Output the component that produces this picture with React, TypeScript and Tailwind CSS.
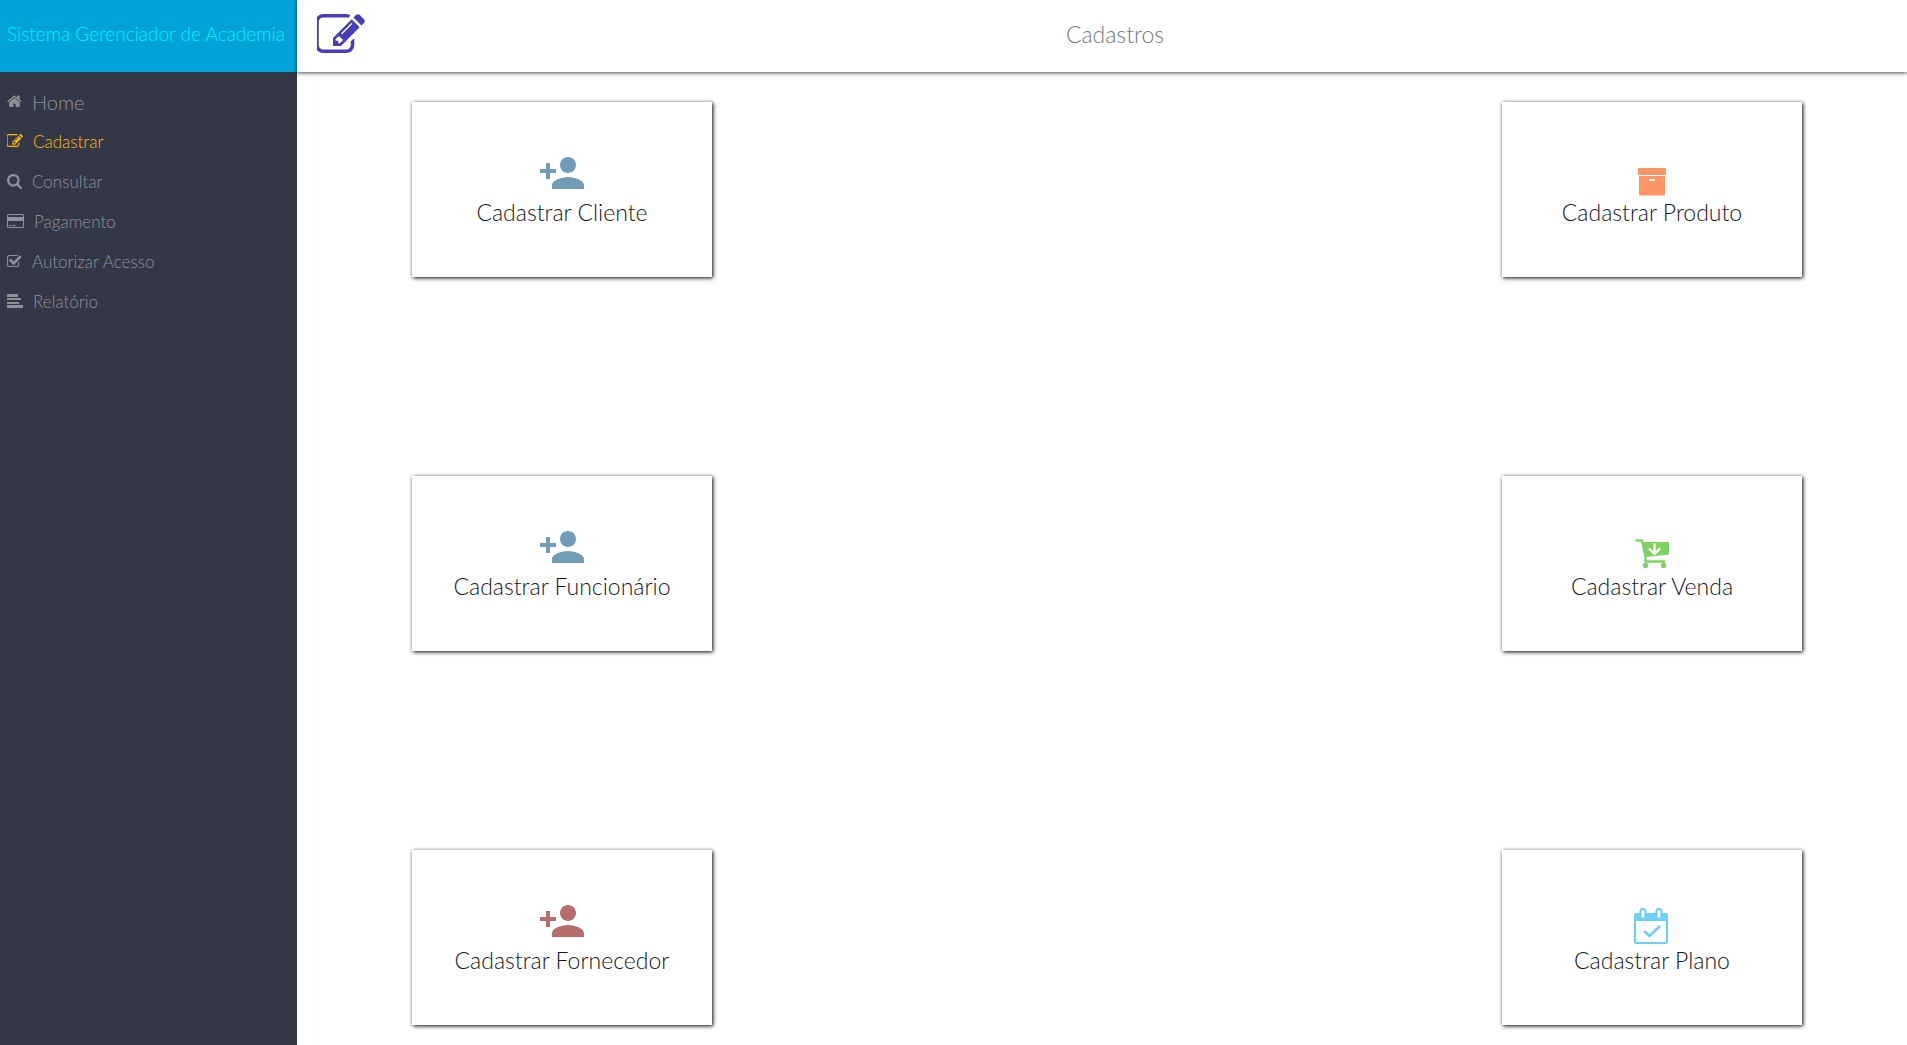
import type { ReactNode } from "react";
import { MdPersonAdd } from "react-icons/md";

const HOME =
  "M1472 992v480q0 26-19 45t-45 19h-384v-384h-256v384h-384q-26 0-45-19t-19-45v-480q0-1 .5-3t.5-3l575-474 575 474q1 2 1 6zm223-69l-62 74q-8 9-21 11h-3q-13 0-21-7l-692-577-692 577q-12 8-24 7-13-2-21-11l-62-74q-8-10-7-23.5t11-21.5l719-599q32-26 76-26t76 26l244 204v-195q0-14 9-23t23-9h192q14 0 23 9t9 23v408l219 182q10 8 11 21.5t-7 23.5z";
const EDIT =
  "M888 1184l116-116-152-152-116 116v56h96v96h56zm440-720q-16-16-33 1l-350 350q-17 17-1 33t33-1l350-350q17-17 1-33zm80 594v190q0 119-84.5 203.5t-203.5 84.5h-832q-119 0-203.5-84.5t-84.5-203.5v-832q0-119 84.5-203.5t203.5-84.5h832q63 0 117 25 15 7 18 23 3 17-9 29l-49 49q-14 14-32 8-23-6-45-6h-832q-66 0-113 47t-47 113v832q0 66 47 113t113 47h832q66 0 113-47t47-113v-126q0-13 9-22l64-64q15-15 35-7t20 29zm-96-738l288 288-672 672h-288v-288zm444 132l-92 92-288-288 92-92q28-28 68-28t68 28l152 152q28 28 28 68t-28 68z";
const SEARCH =
  "M1216 832q0-185-131.5-316.5t-316.5-131.5-316.5 131.5-131.5 316.5 131.5 316.5 316.5 131.5 316.5-131.5 131.5-316.5zm512 832q0 52-38 90t-90 38q-54 0-90-38l-343-342q-179 124-399 124-143 0-273.5-55.5t-225-150-150-225-55.5-273.5 55.5-273.5 150-225 225-150 273.5-55.5 273.5 55.5 225 150 150 225 55.5 273.5q0 220-124 399l343 343q37 37 37 90z";
const CHECK =
  "M1472 930v318q0 119-84.5 203.5t-203.5 84.5h-832q-119 0-203.5-84.5t-84.5-203.5v-832q0-119 84.5-203.5t203.5-84.5h832q63 0 117 25 15 7 18 23 3 17-9 29l-49 49q-10 10-23 10-3 0-9-2-23-6-45-6h-832q-66 0-113 47t-47 113v832q0 66 47 113t113 47h832q66 0 113-47t47-113v-254q0-13 9-22l64-64q10-10 23-10 6 0 12 3 20 8 20 29zm231-489l-814 814q-24 24-57 24t-57-24l-430-430q-24-24-24-57t24-57l110-110q24-24 57-24t57 24l263 263 647-647q24-24 57-24t57 24l110 110q24 24 24 57t-24 57z";

function Glyph({ d, viewBox, className }: { d: string; viewBox: string; className: string }) {
  return (
    <svg viewBox={viewBox} className={className} fill="currentColor" aria-hidden="true">
      <path d={d} />
    </svg>
  );
}

const navItems: { label: string; icon: ReactNode; active?: boolean; size: string }[] = [
  { label: "Home", size: "text-xl", icon: <Glyph d={HOME} viewBox="64 192 1664 1408" className="w-[15px]" /> },
  { label: "Cadastrar", size: "text-[17px]", active: true, icon: <Glyph d={EDIT} viewBox="64 128 1728 1408" className="w-4" /> },
  { label: "Consultar", size: "text-[17px]", icon: <Glyph d={SEARCH} viewBox="64 128 1664 1664" className="w-[15px]" /> },
  {
    label: "Pagamento",
    size: "text-[17px]",
    icon: (
      <svg viewBox="0 0 17 14" className="w-[17px]" fill="currentColor" aria-hidden="true">
        <path
          fillRule="evenodd"
          d="M1.500 0h14A1.500 1.500 0 0 1 17 1.500v11A1.500 1.500 0 0 1 15.500 14h-14A1.500 1.500 0 0 1 0 12.500v-11A1.500 1.500 0 0 1 1.500 0zM1 1.500V3h15V1.500a.5.500 0 0 0-.5-.5h-14a.5.500 0 0 0-.5.500zM1 7v5.500a.5.500 0 0 0 .5.500h14a.5.500 0 0 0 .5-.5V7zM2 11h2v1H2zM5 11h3.500v1H5z"
        />
      </svg>
    ),
  },
  { label: "Autorizar Acesso", size: "text-[17px]", icon: <Glyph d={CHECK} viewBox="64 128 1728 1408" className="w-[15px]" /> },
  { label: "Relatório", size: "text-[17px]", icon: <Glyph d="M0 0h11v3H0zM0 4h14v2H0zM0 8h12v2H0zM0 11h16v3H0z" viewBox="0 0 16 14" className="w-4" /> },
];

function ArchiveIcon() {
  return (
    <svg viewBox="0 0 48 48" className="size-12 text-[#ff9562]" fill="currentColor" aria-hidden="true">
      <rect x="10" y="19" width="28" height="7" rx="1" />
      <path fillRule="evenodd" d="M11 27h26v18.500a1 1 0 0 1-1 1H12a1 1 0 0 1-1-1zM22 30a1 1 0 0 0 0 2h4a1 1 0 0 0 0-2z" />
    </svg>
  );
}

function CartIcon() {
  return (
    <svg viewBox="0 0 48 48" className="size-12 text-[#80d363]" fill="currentColor" aria-hidden="true">
      <path d="M14 19h26q1 0 1 1v10.500q0 1-1 1.200L17.500 34z" />
      <path d="M8.500 17.500H14L17.500 34v4.500H36" fill="none" stroke="currentColor" strokeWidth="2.400" strokeLinecap="round" strokeLinejoin="round" />
      <circle cx="17.500" cy="42.500" r="2.700" />
      <circle cx="35.500" cy="42.500" r="2.700" />
      <path d="M17 40v2M35.500 39v3" stroke="currentColor" strokeWidth="2" />
      <path d="M26.500 21.500v9M21.500 26l5 5 5-5" fill="none" stroke="white" strokeWidth="2.400" strokeLinecap="round" strokeLinejoin="round" />
    </svg>
  );
}

function CalendarIcon() {
  return (
    <svg viewBox="0 0 48 48" className="size-12 text-[#6fcff6]" fill="none" stroke="currentColor" aria-hidden="true">
      <path d="M6 24v-5q0-3 3-3h28q3 0 3 3v5z" fill="currentColor" stroke="none" />
      <rect x="7" y="17" width="32" height="29" rx="2" strokeWidth="2.200" />
      <rect x="12.500" y="12" width="5" height="9.500" rx="2" fill="white" strokeWidth="2.200" />
      <rect x="28.500" y="12" width="5" height="9.500" rx="2" fill="white" strokeWidth="2.200" />
      <path d="M16 34l5.500 5L32 29" strokeWidth="2.600" />
    </svg>
  );
}

const cards: { label: string; icon: ReactNode }[] = [
  { label: "Cadastrar Cliente", icon: <MdPersonAdd className="size-12 text-[#709cb7]" /> },
  { label: "Cadastrar Produto", icon: <ArchiveIcon /> },
  { label: "Cadastrar Funcionário", icon: <MdPersonAdd className="size-12 text-[#709cb7]" /> },
  { label: "Cadastrar Venda", icon: <CartIcon /> },
  { label: "Cadastrar Fornecedor", icon: <MdPersonAdd className="size-12 text-[#b56d6d]" /> },
  { label: "Cadastrar Plano", icon: <CalendarIcon /> },
];

export default function App() {
  return (
    <div className="flex min-h-screen bg-white font-['Lato',sans-serif] font-light">
      <aside className="w-[297px] shrink-0 bg-[#343746]">
        <div className="flex h-18 items-center bg-[#00a3d7] pb-1 pl-[7px] text-[19px] whitespace-nowrap text-[#00f0ff]">
          Sistema Gerenciador de Academia
        </div>
        <nav className="pt-2.5 pl-[7px]">
          {navItems.map((item) => (
            <a
              key={item.label}
              href="#"
              className={`flex h-10 items-center gap-2.5 ${item.size} ${item.active ? "text-[#fdba12]" : "text-[#909297]"}`}
            >
              <span className="pb-0.5">{item.icon}</span>
              {item.label}
            </a>
          ))}
        </nav>
      </aside>
      <div className="flex min-w-0 flex-1 flex-col">
        <header className="flex h-18 items-center pr-[42px] pb-1 pl-5 shadow-[0_1px_4px_#000000b3]">
          <Glyph d={EDIT} viewBox="64 128 1728 1408" className="w-12 text-[#4a3db8]" />
          <h1 className="flex-1 text-center text-[23px] text-[#75787d]">Cadastros</h1>
        </header>
        <main className="grid flex-1 grid-cols-[300px_300px] content-between justify-between pt-[30px] pr-[105px] pb-5 pl-[115px]">
          {cards.map((card) => (
            <button
              key={card.label}
              type="button"
              className="flex h-[175px] flex-col items-center justify-center bg-white pb-1 text-[23px] leading-[30px] text-[#15181b] shadow-[1px_1px_4px_#000]"
            >
              {card.icon}
              {card.label}
            </button>
          ))}
        </main>
      </div>
    </div>
  );
}
